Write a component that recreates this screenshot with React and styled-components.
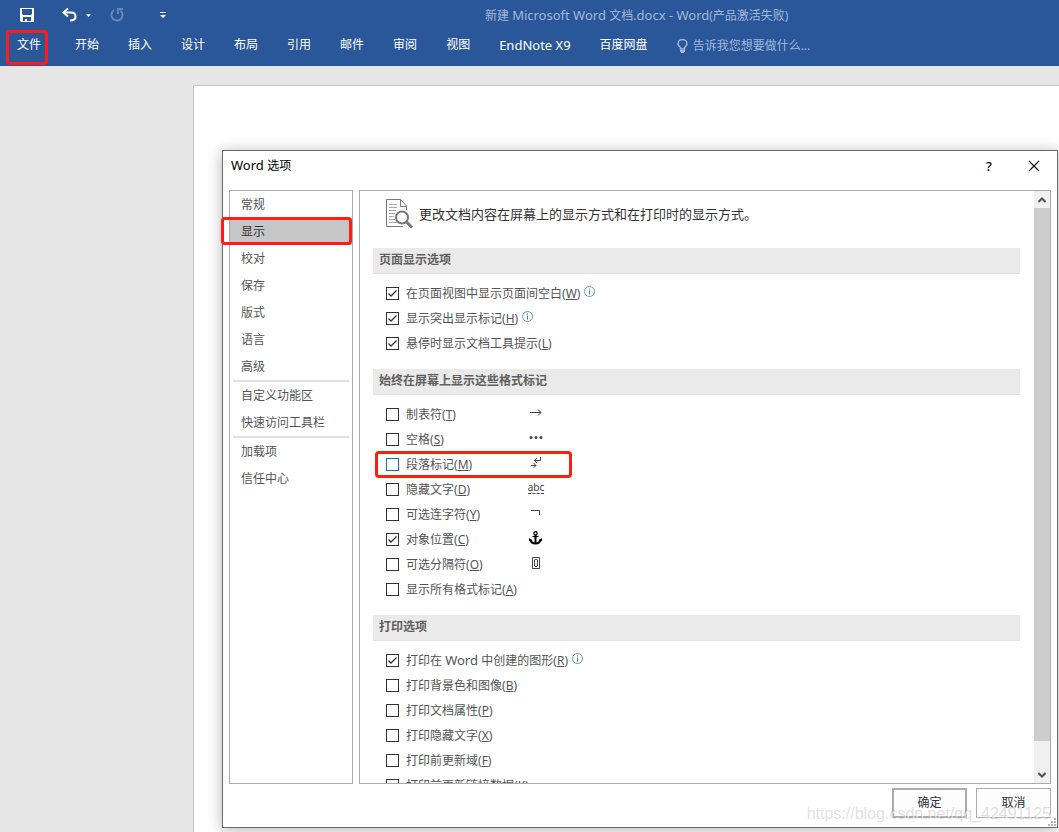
import { useState } from "react";
import styled, { createGlobalStyle, css } from "styled-components";

const GlobalStyle = createGlobalStyle`
  * {
    box-sizing: border-box;
  }

  body {
    margin: 0;
    font-family: "Noto Sans", "Noto Sans CJK SC", sans-serif;
    font-size: 12px;
    line-height: 18px;
    color: #555;
  }

  button,
  input {
    font: inherit;
    color: inherit;
    margin: 0;
    padding: 0;
  }

  svg {
    display: block;
    flex: none;
  }
`;

const highlight = css`
  content: "";
  position: absolute;
  border: 3px solid #fe1d12;
  border-radius: 4px;
  pointer-events: none;
`;

const Window = styled.div`
  position: relative;
  display: flex;
  flex-direction: column;
  height: 100vh;
  overflow: hidden;
  background-color: #e6e6e6;
`;

const Header = styled.header`
  flex: none;
  padding-bottom: 6px;
  background-color: #2a579a;
  color: #fff;
`;

const TitleBar = styled.div`
  display: flex;
  align-items: center;
  height: 30px;
  padding-left: 20px;
`;

const QuickAccess = styled.div`
  display: flex;
  align-items: center;
  flex: none;
  width: 465px;
`;

const QuickButton = styled.button`
  display: flex;
  border: none;
  background: none;
  margin-right: ${({ $gap }) => $gap || 0}px;
  opacity: ${({ disabled }) => (disabled ? 0.28 : 1)};
`;

const DocumentTitle = styled.span`
  padding-top: 1px;
  color: #a3b8d8;
  white-space: nowrap;
`;

const Latin = styled.span`
  font-size: 13px;
`;

const Tabs = styled.nav`
  display: flex;
  align-items: center;
  gap: 29px;
  height: 30px;
  padding-left: 17px;
`;

const Tab = styled.button`
  position: relative;
  flex: none;
  border: none;
  background: none;
  white-space: nowrap;

  ${({ $marked }) =>
    $marked &&
    css`
      margin-right: 5px;

      &::after {
        ${highlight}
        inset: -6px -7px -11px -11px;
      }
    `}
`;

const TellMe = styled.button`
  display: flex;
  align-items: center;
  gap: 5px;
  padding-top: 2px;
  border: none;
  background: none;
  color: #a3b8d8;
  white-space: nowrap;
`;

const Workspace = styled.main`
  display: flex;
  flex: 1;
  padding: 19px 0 0 193px;
`;

const Page = styled.div`
  flex: 1;
  border: 1px solid #c6c6c6;
  border-width: 1px 0 0 1px;
  background-color: #fff;
`;

const DialogLayer = styled.div`
  position: absolute;
  inset: 0;
  display: flex;
  padding: 150px 1px 4px 222px;
`;

const Dialog = styled.section`
  position: relative;
  display: flex;
  flex-direction: column;
  flex: 1;
  min-width: 0;
  padding: 0 6px 9px;
  border: 1px solid #6a6a6a;
  background-color: #fff;
  box-shadow: 0 2px 14px rgba(0, 0, 0, 0.3);
`;

const DialogHeader = styled.div`
  display: flex;
  align-items: center;
  flex: none;
  height: 39px;
  padding: 0 11px 10px 2px;
  color: #000;
`;

const DialogTitle = styled.h1`
  flex: 1;
  margin: 0;
  font-size: 12px;
  font-weight: 400;
`;

const DialogIcon = styled.button`
  display: flex;
  justify-content: center;
  width: 12px;
  margin-left: 33px;
  border: none;
  background: none;
  font-size: 13px;
  font-weight: 500;
`;

const DialogBody = styled.div`
  display: flex;
  flex: 1;
  gap: 6px;
  min-height: 0;
`;

const Categories = styled.nav`
  flex: none;
  width: 124px;
  border: 1px solid #ababab;
`;

const Category = styled.button`
  position: relative;
  display: block;
  width: 100%;
  height: 27px;
  padding-left: 11px;
  border: none;
  background-color: ${({ $active }) => ($active ? "#c6c6c6" : "transparent")};
  color: ${({ $active }) => ($active ? "#333" : "#555")};
  text-align: left;

  ${({ $marked }) =>
    $marked &&
    css`
      &::after {
        ${highlight}
        inset: -1px 0 0 -9px;
      }
    `}
`;

const Separator = styled.hr`
  height: 2px;
  margin: 0 3px;
  border: none;
  background-color: #e1e1e1;
`;

const Panel = styled.div`
  display: flex;
  flex: 1;
  min-width: 0;
  border: 1px solid #ababab;
`;

const PanelContent = styled.div`
  flex: 1;
  min-width: 0;
  padding: 0 14px 0 13px;
  overflow: hidden;
`;

const Intro = styled.div`
  display: flex;
  align-items: center;
  gap: 5px;
  height: 57px;
  padding: 0 0 12px 13px;
  font-size: 13px;
  color: #333;
  white-space: nowrap;
`;

const Group = styled.fieldset`
  min-width: 0;
  margin: 0 0 13px;
  padding: 0;
  border: none;
`;

const GroupTitle = styled.legend`
  width: 100%;
  height: 26px;
  margin-bottom: 7px;
  padding: 3px 6px;
  border-bottom: 1px solid #e1e1e6;
  background-color: #eaeaea;
  color: #606060;
  font-weight: 700;
`;

const OptionRow = styled.div`
  position: relative;
  display: grid;
  grid-template-columns: minmax(141px, max-content) 18px;
  align-items: center;
  height: 25px;
  padding-left: 13px;

  ${({ $marked }) =>
    $marked &&
    css`
      &::after {
        ${highlight}
        inset: -1px auto -1px 2px;
        width: 191px;
      }
    `}
`;

const OptionLabel = styled.label`
  display: flex;
  align-items: center;
  white-space: nowrap;
`;

const CheckBox = styled.span`
  display: grid;
  flex: none;
  margin-right: 7px;

  & > * {
    grid-area: 1 / 1;
  }

  svg {
    pointer-events: none;
  }
`;

const CheckInput = styled.input`
  appearance: none;
  width: 13px;
  height: 13px;
  border: 1px solid ${({ $focused }) => ($focused ? "#0078d7" : "#333")};
  background-color: #fff;
`;

const InfoMark = styled.span`
  margin: 0 0 4px 4px;
`;

const MarkCell = styled.span`
  display: flex;
  justify-content: center;
  padding-bottom: 4px;
`;

const HiddenMark = styled.span`
  height: 13px;
  border-bottom: 1px dashed #444;
  color: #444;
  font-size: 10px;
  line-height: 12px;
`;

const ScrollBar = styled.div`
  display: flex;
  flex-direction: column;
  flex: none;
  width: 16px;
  background-color: #f0f0f0;
`;

const ScrollButton = styled.button`
  display: flex;
  align-items: center;
  justify-content: center;
  height: 17px;
  border: none;
  background: none;
`;

const ScrollThumb = styled.div`
  flex: 1;
  margin-bottom: 25px;
  background-color: #cdcdcd;
`;

const Footer = styled.div`
  display: flex;
  justify-content: flex-end;
  flex: none;
  gap: 9px;
  padding-top: 4px;
`;

const DialogButton = styled.button`
  width: 75px;
  height: 30px;
  border: ${({ $primary }) => ($primary ? 2 : 1)}px solid #ababab;
  background-color: #fdfdfd;
  color: #333;
`;

const Grip = styled.span`
  position: absolute;
  right: 1px;
  bottom: 1px;
`;

const Watermark = styled.span`
  position: absolute;
  right: 8px;
  bottom: 8px;
  color: rgba(170, 170, 170, 0.36);
  font-family: "Liberation Sans", sans-serif;
  font-size: 16px;
  line-height: 20px;
  text-shadow: 1px 1px 0 rgba(255, 255, 255, 0.6);
  pointer-events: none;
`;

const tabs = [
  "文件",
  "开始",
  "插入",
  "设计",
  "布局",
  "引用",
  "邮件",
  "审阅",
  "视图",
  "EndNote X9",
  "百度网盘",
];

const categories = [
  ["常规", "显示", "校对", "保存", "版式", "语言", "高级"],
  ["自定义功能区", "快速访问工具栏"],
  ["加载项", "信任中心"],
];

const groups = [
  {
    title: "页面显示选项",
    options: [
      { text: "在页面视图中显示页面间空白", hotkey: "W", checked: true, info: true },
      { text: "显示突出显示标记", hotkey: "H", checked: true, info: true },
      { text: "悬停时显示文档工具提示", hotkey: "L", checked: true },
    ],
  },
  {
    title: "始终在屏幕上显示这些格式标记",
    options: [
      { text: "制表符", hotkey: "T", mark: "tab" },
      { text: "空格", hotkey: "S", mark: "space" },
      { text: "段落标记", hotkey: "M", mark: "paragraph", focused: true },
      { text: "隐藏文字", hotkey: "D", mark: "hidden" },
      { text: "可选连字符", hotkey: "Y", mark: "hyphen" },
      { text: "对象位置", hotkey: "C", mark: "anchor", checked: true },
      { text: "可选分隔符", hotkey: "O", mark: "break" },
      { text: "显示所有格式标记", hotkey: "A" },
    ],
  },
  {
    title: "打印选项",
    options: [
      { text: "打印在 Word 中创建的图形", hotkey: "R", checked: true, info: true },
      { text: "打印背景色和图像", hotkey: "B" },
      { text: "打印文档属性", hotkey: "P" },
      { text: "打印隐藏文字", hotkey: "X" },
      { text: "打印前更新域", hotkey: "F" },
      { text: "打印前更新链接数据", hotkey: "K" },
    ],
  },
];

const SaveIcon = () => (
  <svg width="14" height="14" viewBox="0 0 14 14" fill="#fff">
    <path
      fillRule="evenodd"
      d="M0 0H14V14H1L0 13ZM2 1V6L3 7H11L12 6V1ZM3 9V13H5V11H7V13H11V9Z"
    />
  </svg>
);

const UndoIcon = () => (
  <svg width="15" height="14" viewBox="0 0 15 14" fill="none" stroke="#fff">
    <path d="M6 0.5L1.5 4.5L6 8.5" strokeWidth="2" />
    <path d="M2 4.5H9C12 4.5 13.5 6.3 13.5 8.5C13.5 11 11.5 12.5 8 12.5" strokeWidth="2" />
  </svg>
);

const RedoIcon = () => (
  <svg width="14" height="14" viewBox="0 0 14 14" fill="none" stroke="#fff" strokeWidth="2">
    <path d="M4 2.2A5.6 5.6 0 1 0 10.5 2.6" />
    <path d="M8 6V1H13" />
  </svg>
);

const CaretIcon = () => (
  <svg width="5" height="3" viewBox="0 0 5 3" fill="#fff">
    <path d="M0 0H5L2.5 3Z" />
  </svg>
);

const CustomizeIcon = () => (
  <svg width="6" height="6" viewBox="0 0 6 6" fill="#fff">
    <path d="M0 0H6V1H0ZM0 3H6L3 6Z" />
  </svg>
);

const BulbIcon = () => (
  <svg width="11" height="14" viewBox="0 0 11 14" fill="none" stroke="#a3b8d8">
    <path
      strokeWidth="1.5"
      d="M3.5 10V8.5C2 7.5 1 6.5 1 4.8A4.4 4.2 0 0 1 10 4.8C10 6.5 9 7.5 7.5 8.5V10Z"
    />
    <path strokeWidth="2" d="M3 12H8" />
    <path d="M4 13.5H7" />
  </svg>
);

const CloseIcon = () => (
  <svg width="12" height="12" viewBox="0 0 12 12" stroke="#000" strokeWidth="1.1">
    <path d="M1 1L11 11M11 1L1 11" />
  </svg>
);

const PreviewIcon = () => (
  <svg width="28" height="30" viewBox="0 0 28 30" fill="none" stroke="#777">
    <path d="M20.5 11V7L14.5 0.5H0.5V27.5H17M14.5 0.5V7.5H20.5" />
    <path
      stroke="#aaa"
      d="M3 5.5H11M3 8.5H11M3 11.5H10M3 14.5H9M3 17.5H8M3 20.5H9M3 23.5H11"
    />
    <circle cx="16" cy="18.5" r="6" fill="#fff" strokeWidth="2" />
    <path d="M20.5 23L26 28.5" strokeWidth="3" />
  </svg>
);

const CheckIcon = () => (
  <svg width="13" height="13" viewBox="0 0 13 13" fill="none" stroke="#333" strokeWidth="1.3">
    <path d="M2.5 6.5L5 9L10.5 3.5" />
  </svg>
);

const InfoIcon = () => (
  <svg width="11" height="11" viewBox="0 0 11 11" fill="none" stroke="#6b95cb">
    <circle cx="5.5" cy="5.5" r="5" />
    <path stroke="#4472b0" d="M5.5 2.5V3.5M5.5 4.5V8.5" />
  </svg>
);

const ChevronIcon = ({ up }) => (
  <svg width="8" height="6" viewBox="0 0 8 6" fill="none" stroke="#505050" strokeWidth="2">
    <path d={up ? "M0.5 5L4 1.5L7.5 5" : "M0.5 1L4 4.5L7.5 1"} />
  </svg>
);

const GripIcon = () => (
  <svg width="8" height="8" viewBox="0 0 8 8" fill="#b0b0b0">
    <path d="M6 0H8V2H6ZM3 3H5V5H3ZM6 3H8V5H6ZM0 6H2V8H0ZM3 6H5V8H3ZM6 6H8V8H6Z" />
  </svg>
);

const markIcons = {
  tab: (
    <svg width="12" height="7" viewBox="0 0 12 7" fill="none" stroke="#444">
      <path d="M0 3.5H11M8 0.5L11 3.5L8 6.5" />
    </svg>
  ),
  space: (
    <svg width="14" height="3" viewBox="0 0 14 3" fill="#444">
      <circle cx="2" cy="1.5" r="1.5" />
      <circle cx="7" cy="1.5" r="1.5" />
      <circle cx="12" cy="1.5" r="1.5" />
    </svg>
  ),
  paragraph: (
    <svg width="12" height="12" viewBox="0 0 12 12" fill="none" stroke="#444">
      <path d="M10.5 0V3.5H4.5M7 1L4.5 3.5L7 6" />
      <path d="M1 8.5H6M3.5 6L6 8.5L3.5 11" />
    </svg>
  ),
  hidden: <HiddenMark>abc</HiddenMark>,
  hyphen: (
    <svg width="10" height="5" viewBox="0 0 10 5" fill="none" stroke="#444">
      <path d="M0 0.5H8.5V5" />
    </svg>
  ),
  anchor: (
    <svg width="14" height="14" viewBox="0 0 14 14" fill="none" stroke="#000">
      <circle cx="6.5" cy="2.3" r="1.6" strokeWidth="1.3" />
      <path strokeWidth="2" d="M6.5 4V12.5" />
      <path strokeWidth="1.2" d="M3.5 5.5H9.5" />
      <path strokeWidth="2" d="M1.5 8.5C2 11.3 4 12.6 6.5 12.6C9 12.6 11 11.3 11.5 8.5" />
      <path fill="#000" stroke="none" d="M0 10V7L3.5 9.5ZM13 10V7L9.5 9.5Z" />
    </svg>
  ),
  break: (
    <svg width="8" height="12" viewBox="0 0 8 12" fill="none" stroke="#444">
      <path d="M0.5 0.5H7.5V11.5H0.5Z" />
      <path d="M2.5 3C2.5 2 5.5 2 5.5 3V9C5.5 10 2.5 10 2.5 9Z" />
    </svg>
  ),
};

// Latin words are set one size larger than the Chinese around them
const MixedText = ({ text }) =>
  text
    .split(/([A-Za-z][A-Za-z0-9 .-]+)/)
    .map((part, index) => (index % 2 ? <Latin key={index}>{part}</Latin> : part));

const Option = ({ option }) => {
  const [checked, setChecked] = useState(Boolean(option.checked));

  return (
    <OptionRow $marked={option.focused}>
      <OptionLabel>
        <CheckBox>
          <CheckInput
            type="checkbox"
            checked={checked}
            $focused={option.focused}
            onChange={() => setChecked(!checked)}
          />
          {checked && <CheckIcon />}
        </CheckBox>
        <span>
          <MixedText text={option.text} />(<u>{option.hotkey}</u>)
        </span>
        {option.info && (
          <InfoMark>
            <InfoIcon />
          </InfoMark>
        )}
      </OptionLabel>
      {option.mark && <MarkCell>{markIcons[option.mark]}</MarkCell>}
    </OptionRow>
  );
};

const OptionsDialog = () => {
  const [active, setActive] = useState("显示");

  return (
    <Dialog role="dialog" aria-labelledby="dialog-title">
      <DialogHeader>
        <DialogTitle id="dialog-title">
          <MixedText text="Word 选项" />
        </DialogTitle>
        <DialogIcon type="button">?</DialogIcon>
        <DialogIcon type="button" aria-label="关闭">
          <CloseIcon />
        </DialogIcon>
      </DialogHeader>
      <DialogBody>
        <Categories>
          {categories.map((names, index) => (
            <div key={names[0]}>
              {index > 0 && <Separator />}
              {names.map((name) => (
                <Category
                  key={name}
                  type="button"
                  $active={name === active}
                  $marked={name === "显示"}
                  onClick={() => setActive(name)}
                >
                  {name}
                </Category>
              ))}
            </div>
          ))}
        </Categories>
        <Panel>
          <PanelContent>
            <Intro>
              <PreviewIcon />
              更改文档内容在屏幕上的显示方式和在打印时的显示方式。
            </Intro>
            {groups.map((group) => (
              <Group key={group.title}>
                <GroupTitle>{group.title}</GroupTitle>
                {group.options.map((option) => (
                  <Option key={option.text} option={option} />
                ))}
              </Group>
            ))}
          </PanelContent>
          <ScrollBar>
            <ScrollButton type="button" aria-label="向上滚动">
              <ChevronIcon up />
            </ScrollButton>
            <ScrollThumb />
            <ScrollButton type="button" aria-label="向下滚动">
              <ChevronIcon />
            </ScrollButton>
          </ScrollBar>
        </Panel>
      </DialogBody>
      <Footer>
        <DialogButton type="button" $primary>
          确定
        </DialogButton>
        <DialogButton type="button">取消</DialogButton>
      </Footer>
      <Grip>
        <GripIcon />
      </Grip>
    </Dialog>
  );
};

const App = () => (
  <>
    <GlobalStyle />
    <Window>
      <Header>
        <TitleBar>
          <QuickAccess>
            <QuickButton type="button" aria-label="保存" $gap={28}>
              <SaveIcon />
            </QuickButton>
            <QuickButton type="button" aria-label="撤消" $gap={9}>
              <UndoIcon />
            </QuickButton>
            <QuickButton type="button" aria-label="撤消列表" $gap={19}>
              <CaretIcon />
            </QuickButton>
            <QuickButton type="button" aria-label="重复" disabled $gap={36}>
              <RedoIcon />
            </QuickButton>
            <QuickButton type="button" aria-label="自定义快速访问工具栏">
              <CustomizeIcon />
            </QuickButton>
          </QuickAccess>
          <DocumentTitle>
            <MixedText text="新建 Microsoft Word 文档.docx - Word(产品激活失败)" />
          </DocumentTitle>
        </TitleBar>
        <Tabs>
          {tabs.map((tab) => (
            <Tab key={tab} type="button" $marked={tab === "文件"}>
              <MixedText text={tab} />
            </Tab>
          ))}
          <TellMe type="button">
            <BulbIcon />
            告诉我您想要做什么...
          </TellMe>
        </Tabs>
      </Header>
      <Workspace>
        <Page />
      </Workspace>
      <DialogLayer>
        <OptionsDialog />
      </DialogLayer>
      <Watermark>https://blog.csdn.net/qq_42491125</Watermark>
    </Window>
  </>
);

export default App;
